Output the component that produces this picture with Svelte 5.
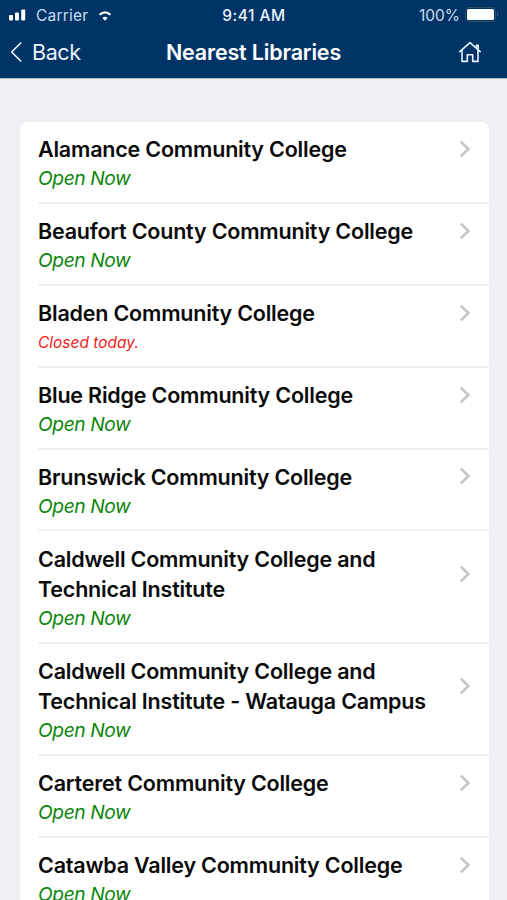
<script>
    let libraries = $state([
        { name: 'Alamance Community College', open: true },
        { name: 'Beaufort County Community College', open: true },
        { name: 'Bladen Community College', open: false },
        { name: 'Blue Ridge Community College', open: true },
        { name: 'Brunswick Community College', open: true },
        { name: 'Caldwell Community College and Technical Institute', open: true },
        { name: 'Caldwell Community College and Technical Institute - Watauga Campus', open: true },
        { name: 'Carteret Community College', open: true },
        { name: 'Catawba Valley Community College', open: true }
    ]);
</script>

<div class="screen">
    <header>
        <div class="status-bar">
            <div class="carrier">
                <svg class="signal" width="17" height="12" viewBox="0 0 17 12" fill="#fff">
                    <rect x="0" y="6" width="4" height="5.5" rx="1" />
                    <rect x="6" y="3.5" width="4" height="8" rx="1" />
                    <rect x="12.2" y="0.5" width="4" height="11" rx="1" />
                </svg>
                <span class="carrier-name">Carrier</span>
                <svg class="wifi" width="12" height="10" viewBox="0 0 12 10" fill="none" stroke="#fff">
                    <path d="M0.6 3.8Q6 -1 11.4 3.8" stroke-width="2.2" />
                    <path d="M3.4 7Q6 4.4 8.6 7L6 9.7Z" fill="#fff" stroke="none" />
                </svg>
            </div>
            <div class="time">9:41 AM</div>
            <div class="power">
                <span class="percent">100%</span>
                <svg width="34" height="16" viewBox="0 0 34 16">
                    <rect x="0.5" y="0.5" width="30" height="14" rx="3" fill="none" stroke="#2d5064" />
                    <rect x="2" y="2" width="27" height="11" rx="1.5" fill="#fff" />
                    <path d="M32 5Q34 7.5 32 10Z" fill="#44647c" />
                </svg>
            </div>
        </div>
        <nav>
            <button class="back">
                <svg width="13" height="22" viewBox="0 0 13 22" fill="none" stroke="#e9f1fa" stroke-width="1.6">
                    <path d="M11.2 1.5L1.7 11L11.2 20.5" />
                </svg>
                <span>Back</span>
            </button>
            <h1>Nearest Libraries</h1>
            <button class="home" aria-label="Home">
                <svg width="24" height="22" viewBox="0 0 24 22" fill="none" stroke="#e9f1fa" stroke-width="1.6" stroke-linejoin="round" stroke-linecap="round">
                    <path d="M1.8 10.6L12 1.6L22.2 10.6" />
                    <path d="M18.4 6.5V4.2H20.2V8.2" />
                    <path d="M4 9.4V20.4H9.3V13.7H14.7V20.4H20V9.4" />
                </svg>
            </button>
        </nav>
    </header>

    <ul>
        {#each libraries as library}
            <li>
                <div class="title">
                    <h2>{library.name}</h2>
                    <svg width="12" height="18" viewBox="0 0 12 18" fill="none" stroke="#c5c5c7" stroke-width="2.6">
                        <path d="M1.8 1.6L9.4 9L1.8 16.4" />
                    </svg>
                </div>
                <p class:closed={!library.open}>{library.open ? 'Open Now' : 'Closed today.'}</p>
            </li>
        {/each}
    </ul>
</div>

<style>
    :global(body) {
        margin: 0;
        overflow: hidden;
    }

    .screen {
        height: 900px;
        overflow: hidden;
        background-color: #efeff4;
        font-family: Inter, sans-serif;
    }

    header {
        height: 78px;
        background-color: #003466;
        border-bottom: 1px solid #a9bccd;
        color: #fff;
    }

    .status-bar {
        display: grid;
        grid-template-columns: 1fr auto 1fr;
        align-items: center;
        height: 30px;
        padding: 0 8px 0 9px;
        font-size: 15.5px;
    }

    .carrier {
        display: flex;
        align-items: center;
    }

    .carrier-name {
        margin: 0 11px 0 10px;
        color: #c9dcef;
        letter-spacing: 0.2px;
    }

    .wifi {
        margin-top: 2px;
    }

    .time {
        font-weight: 500;
        color: #e9f1fa;
        letter-spacing: 0.5px;
    }

    .power {
        display: flex;
        align-items: center;
        justify-content: flex-end;
        gap: 5px;
        color: #c9dcef;
    }

    nav {
        display: grid;
        grid-template-columns: 1fr auto 1fr;
        align-items: center;
        height: 44px;
        padding: 0 10px;
    }

    button {
        display: flex;
        align-items: center;
        padding: 0;
        border: none;
        background: none;
        color: #e9f1fa;
        font: inherit;
        cursor: pointer;
    }

    .back {
        gap: 9px;
        font-size: 21.5px;
        letter-spacing: -0.4px;
    }

    .home {
        justify-self: end;
        margin-right: 15px;
    }

    h1 {
        margin: 0;
        font-size: 21.5px;
        font-weight: 600;
        letter-spacing: -0.17px;
    }

    ul {
        margin: 43px 18px 0 19.5px;
        padding: 0;
        border-radius: 7px;
        background-color: #fff;
        list-style: none;
    }

    li {
        margin-left: 18.5px;
        padding: 12.2px 18px 9.7px 0;
        border-bottom: 2px solid #f1f1f4;
    }

    .title {
        display: flex;
        align-items: center;
        justify-content: space-between;
    }

    h2 {
        margin: 0;
        color: #0a0a0a;
        font-size: 21.5px;
        font-weight: 600;
        letter-spacing: -0.2px;
        line-height: 30.5px;
    }

    p {
        margin: 0;
        padding-top: 0.5px;
        color: #0b850b;
        font-size: 19.2px;
        font-style: italic;
        letter-spacing: -0.4px;
        line-height: 27px;
    }

    p.closed {
        padding-top: 1.5px;
        color: #f01b1b;
        font-size: 15.5px;
        letter-spacing: 0;
        line-height: 26px;
    }

    .title svg {
        flex-shrink: 0;
        margin-top: -1px;
    }
</style>
